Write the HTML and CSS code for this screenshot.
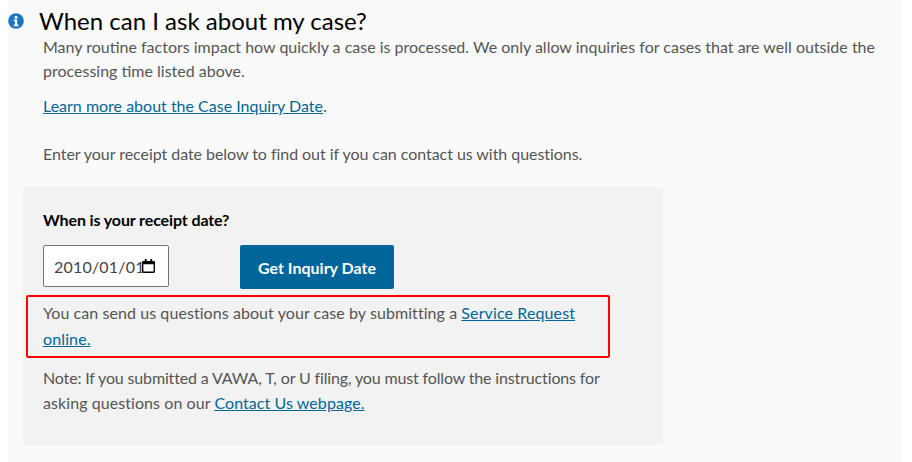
FILE: index.html
```html
<!DOCTYPE html>
<html lang="en">
<head>
<meta charset="utf-8">
<title>When can I ask about my case?</title>
<link rel="stylesheet" href="styles.css">
</head>
<body>
<main class="panel">
  <h2 class="heading">
    <svg class="info" viewBox="0 0 16 16" aria-hidden="true"><circle cx="8" cy="8" r="7.8" fill="#1a76c4"/><circle cx="8" cy="4.2" r="1.5" fill="#fff"/><path d="M5.8 6.6h3.4v5h1.2v1.6H5.8v-1.6h1.2V8.2H5.8z" fill="#fff"/></svg>
    <span>When can I ask about my case?</span>
  </h2>
  <div class="intro">
    <p class="lead">Many routine factors impact how quickly a case is processed. We only allow inquiries for cases that are well outside the processing time listed above.</p>
    <p class="learn"><a href="#">Learn more about the Case Inquiry Date</a>.</p>
    <p class="enter">Enter your receipt date below to find out if you can contact us with questions.</p>
  </div>
  <section class="card">
    <label class="label" for="receipt">When is your receipt date?</label>
    <div class="controls">
      <div class="date">
        <input class="date-value" id="receipt" type="text" value="2010/01/01">
        <svg class="calendar" viewBox="0 0 14 15" aria-hidden="true"><path d="M3 0h2v2h4V0h2v2h1.5A1.5 1.5 0 0 1 14 3.500v10a1.500 1.500 0 0 1-1.500 1.500h-11A1.500 1.500 0 0 1 0 13.500v-10A1.500 1.500 0 0 1 1.500 2H3zM1.500 5.500v8h11v-8z" fill="#000" fill-rule="evenodd"/></svg>
      </div>
      <button class="btn" type="button">Get Inquiry Date</button>
    </div>
    <div class="result">
      <p class="answer"><span class="answer-text">You can send us questions about your case by submitting a</span> <a class="answer-link" href="#">Service Request online.</a></p>
      <div class="highlight"></div>
    </div>
    <p class="note"><span class="note-one">Note: If you submitted a VAWA, T, or U filing, you must follow the instructions for</span> <span class="note-two">asking questions on our <a href="#">Contact Us webpage.</a></span></p>
  </section>
</main>
</body>
</html>
```
FILE: styles.css
```css
* { box-sizing: border-box; }
html, body { margin: 0; background: #fff; }
body { height: 462px; overflow: hidden; font-family: "Lato", "Liberation Sans", sans-serif; color: #555; font-size: 16px; }
.panel { margin-left: 8px; width: 894px; height: 462px; background: #fafafa; }
.heading { margin: 0; display: flex; align-items: center; height: 41px; padding-bottom: 0; font-weight: 400; font-size: 24px; color: #000; }
.info { width: 16px; height: 16px; margin-left: 0; margin-right: 15px; flex: none; }
.intro { margin-top: -6px; padding: 0 20px 0 35px; }
.intro p { margin: 0; line-height: 24px; }
.lead { height: 48px; }
.learn { margin-top: 11px !important; }
.enter { margin-top: 24px !important; letter-spacing: -0.05px; }
a { color: #006699; text-decoration: underline; }
.card { margin: 21px 0 0 15px; width: 640px; height: 258px; background: #f2f2f2; padding: 21px 20px 0; }
.label { display: block; font-weight: 700; color: #000; line-height: 24px; letter-spacing: -0.12px; }
.controls { display: flex; align-items: flex-start; margin-top: 13px; }
.date { display: flex; align-items: center; width: 126px; height: 42px; border: 1px solid #767676; border-radius: 2px; background: #fff; padding: 0 12px 0 10px; }
.date-value { width: 88px; flex: none; border: 0; padding: 0; background: transparent; font: 16px "Lato", sans-serif; color: #444; letter-spacing: 0.2px; outline: none; }
.calendar { width: 13px; height: 14px; flex: none; }
.btn { margin-left: 71px; width: 154px; height: 44px; background: #006699; color: #fff; border: 0; border-radius: 2px; font: 700 16px "Lato", sans-serif; }
.result { position: relative; margin-top: 11px; }
.answer { margin: 0; line-height: 26px; width: 560px; }
.answer-text { letter-spacing: 0.07px; }
.answer-link { letter-spacing: 0.12px; }
.highlight { position: absolute; left: -17px; top: -5px; width: 584px; height: 63px; border: 2px solid #f00; border-radius: 2px; }
.note { margin: 13px 0 0; line-height: 25px; width: 590px; }
.note-one { display: block; letter-spacing: -0.15px; }
.note-two { display: block; letter-spacing: 0.07px; }
```
